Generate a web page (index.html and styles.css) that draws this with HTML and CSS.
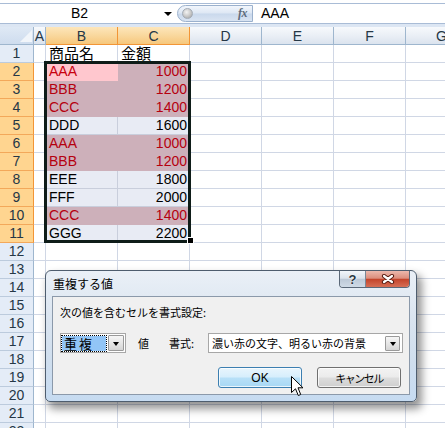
FILE: index.html
```html
<!DOCTYPE html>
<html lang="ja">
<head>
<meta charset="utf-8">
<title>重複する値</title>
<link rel="stylesheet" href="styles.css">
</head>
<body>
<div class="app">
  <div class="fbar">
    <div class="fbar-in">
      <div class="namebox"><span class="nb-text">B2</span><span class="nb-arrow"></span></div>
      <div class="pill"><span class="pill-dot"></span><span class="fx">fx</span></div>
      <div class="formula">AAA</div>
    </div>
  </div>

  <div class="sheet">
    <div class="row hdr">
      <div class="corner"><span class="tri"></span></div>
      <div class="ch">A</div>
      <div class="ch sel">B</div>
      <div class="ch sel">C</div>
      <div class="ch">D</div>
      <div class="ch">E</div>
      <div class="ch">F</div>
      <div class="ch">G</div>
    </div>
    <div class="row"><div class="rh">1</div><div class="c"></div><div class="c b jp">商品名</div><div class="c b jp">金額</div><div class="c"></div><div class="c"></div><div class="c"></div><div class="c"></div></div>
    <div class="row"><div class="rh sel">2</div><div class="c"></div><div class="c b act">AAA</div><div class="c n dup">1000</div><div class="c"></div><div class="c"></div><div class="c"></div><div class="c"></div></div>
    <div class="row"><div class="rh sel">3</div><div class="c"></div><div class="c b dup">BBB</div><div class="c n dup">1200</div><div class="c"></div><div class="c"></div><div class="c"></div><div class="c"></div></div>
    <div class="row"><div class="rh sel">4</div><div class="c"></div><div class="c b dup">CCC</div><div class="c n dup">1400</div><div class="c"></div><div class="c"></div><div class="c"></div><div class="c"></div></div>
    <div class="row"><div class="rh sel">5</div><div class="c"></div><div class="c b in">DDD</div><div class="c n in">1600</div><div class="c"></div><div class="c"></div><div class="c"></div><div class="c"></div></div>
    <div class="row"><div class="rh sel">6</div><div class="c"></div><div class="c b dup">AAA</div><div class="c n dup">1000</div><div class="c"></div><div class="c"></div><div class="c"></div><div class="c"></div></div>
    <div class="row"><div class="rh sel">7</div><div class="c"></div><div class="c b dup">BBB</div><div class="c n dup">1200</div><div class="c"></div><div class="c"></div><div class="c"></div><div class="c"></div></div>
    <div class="row"><div class="rh sel">8</div><div class="c"></div><div class="c b in">EEE</div><div class="c n in">1800</div><div class="c"></div><div class="c"></div><div class="c"></div><div class="c"></div></div>
    <div class="row"><div class="rh sel">9</div><div class="c"></div><div class="c b in">FFF</div><div class="c n in">2000</div><div class="c"></div><div class="c"></div><div class="c"></div><div class="c"></div></div>
    <div class="row"><div class="rh sel">10</div><div class="c"></div><div class="c b dup">CCC</div><div class="c n dup">1400</div><div class="c"></div><div class="c"></div><div class="c"></div><div class="c"></div></div>
    <div class="row"><div class="rh sel">11</div><div class="c"></div><div class="c b in">GGG</div><div class="c n in">2200</div><div class="c"></div><div class="c"></div><div class="c"></div><div class="c"></div></div>
    <div class="row"><div class="rh">12</div><div class="c"></div><div class="c"></div><div class="c"></div><div class="c"></div><div class="c"></div><div class="c"></div><div class="c"></div></div>
    <div class="row"><div class="rh">13</div><div class="c"></div><div class="c"></div><div class="c"></div><div class="c"></div><div class="c"></div><div class="c"></div><div class="c"></div></div>
    <div class="row"><div class="rh">14</div><div class="c"></div><div class="c"></div><div class="c"></div><div class="c"></div><div class="c"></div><div class="c"></div><div class="c"></div></div>
    <div class="row"><div class="rh">15</div><div class="c"></div><div class="c"></div><div class="c"></div><div class="c"></div><div class="c"></div><div class="c"></div><div class="c"></div></div>
    <div class="row"><div class="rh">16</div><div class="c"></div><div class="c"></div><div class="c"></div><div class="c"></div><div class="c"></div><div class="c"></div><div class="c"></div></div>
    <div class="row"><div class="rh">17</div><div class="c"></div><div class="c"></div><div class="c"></div><div class="c"></div><div class="c"></div><div class="c"></div><div class="c"></div></div>
    <div class="row"><div class="rh">18</div><div class="c"></div><div class="c"></div><div class="c"></div><div class="c"></div><div class="c"></div><div class="c"></div><div class="c"></div></div>
    <div class="row"><div class="rh">19</div><div class="c"></div><div class="c"></div><div class="c"></div><div class="c"></div><div class="c"></div><div class="c"></div><div class="c"></div></div>
    <div class="row"><div class="rh">20</div><div class="c"></div><div class="c"></div><div class="c"></div><div class="c"></div><div class="c"></div><div class="c"></div><div class="c"></div></div>
    <div class="row"><div class="rh">21</div><div class="c"></div><div class="c"></div><div class="c"></div><div class="c"></div><div class="c"></div><div class="c"></div><div class="c"></div></div>
    <div class="row"><div class="rh">22</div><div class="c"></div><div class="c"></div><div class="c"></div><div class="c"></div><div class="c"></div><div class="c"></div><div class="c"></div></div>

    <div class="selbox"></div>
    <div class="handle"></div>
  </div>

  <div class="dlg">
    <div class="dlg-title">重複する値</div>
    <div class="caps">
      <div class="cap cap-help">?</div>
      <div class="cap cap-close">
        <svg width="14" height="10" viewBox="0 0 14 10"><path d="M3 2 L11 8 M11 2 L3 8" stroke="#5a1d12" stroke-width="4.2" stroke-linecap="round"/><path d="M3 2 L11 8 M11 2 L3 8" stroke="#ffffff" stroke-width="2.2" stroke-linecap="round"/></svg>
      </div>
    </div>
    <div class="panel">
      <div class="lbl">次の値を含むセルを書式設定:</div>
      <div class="crow">
        <div class="combo combo1">
          <span class="selt">重複</span>
          <span class="ddb"><span class="ddtri"></span></span>
        </div>
        <span class="word w-val">値</span>
        <span class="word w-fmt">書式:</span>
        <div class="combo combo2">
          <span class="ctext">濃い赤の文字、明るい赤の背景</span>
          <span class="ddb"><span class="ddtri"></span></span>
        </div>
      </div>
      <div class="brow">
        <div class="btn btn-ok">OK</div>
        <div class="btn btn-cancel">キャンセル</div>
      </div>
    </div>
  </div>

  <svg class="cursor" width="13" height="21" viewBox="0 0 13 21"><path d="M0.5 0.5 L0.5 16.5 L4.5 12.8 L7.3 19.5 L9.7 18.5 L7 11.8 L12 11.8 Z" fill="#fff" stroke="#000" stroke-width="1" stroke-linejoin="miter"/></svg>
</div>
</body>
</html>
```

FILE: styles.css
```css
* { box-sizing: border-box; }
html, body { margin: 0; padding: 0; }
body {
  width: 445px;
  height: 428px;
  overflow: hidden;
  background: #fff;
  font-family: "Liberation Sans", "Noto Sans CJK JP", sans-serif;
  font-size: 14px;
  color: #000;
}
.app { position: relative; width: 445px; height: 428px; overflow: hidden; }

/* formula bar */
.fbar {
  height: 27px;
  padding-top: 3px;
  background: #fff;
  border-bottom: 3px solid #dce6f3;
}
.fbar-in {
  height: 21px;
  display: flex;
  align-items: center;
  background: #fff;
  border-top: 1px solid #a9bcd6;
  border-bottom: 1px solid #a9bcd6;
}
.namebox { width: 177px; height: 100%; display: flex; align-items: center; flex: none; }
.nb-text { width: 159px; text-align: center; line-height: 19px; }
.nb-arrow {
  width: 0; height: 0;
  margin-left: 5px;
  border-left: 4px solid transparent;
  border-right: 4px solid transparent;
  border-top: 4px solid #000;
}
.pill {
  flex: none;
  width: 76px;
  height: 17px;
  display: flex;
  align-items: center;
  border: 1px solid #9bb1cd;
  border-radius: 9px 0 0 9px;
  background: linear-gradient(#f2f6fc 0%, #dde7f4 48%, #c9d8ec 52%, #d9e4f2 100%);
}
.pill-dot {
  width: 11px; height: 11px;
  margin-left: 4px;
  border-radius: 50%;
  background: radial-gradient(circle at 40% 35%, #f4f4f4 0%, #c6c6c6 55%, #9a9a9a 100%);
  border: 1px solid #a4acb6;
}
.fx {
  margin-left: auto;
  margin-right: 5px;
  font-family: "Liberation Serif", serif;
  font-style: italic;
  font-weight: bold;
  font-size: 12px;
  color: #5f6c7c;
  letter-spacing: -0.5px;
}
.formula { padding-left: 8px; line-height: 19px; }

/* sheet */
.sheet { position: relative; }
.row {
  display: grid;
  grid-template-columns: 34px 12px repeat(6, 72px);
  height: 18px;
}
.row > div {
  height: 18px;
  border-right: 1px solid #d0d7e5;
  border-bottom: 1px solid #d0d7e5;
  line-height: 17px;
  white-space: nowrap;
  overflow: hidden;
}
.hdr > div { line-height: 18px; }
.corner {
  background: linear-gradient(#dfe9f5, #cedcee);
  display: flex;
  align-items: flex-end;
  justify-content: flex-end;
  padding: 0 1px 2px 0;
  border-right-color: #9eb6ce !important;
  border-bottom-color: #9eb6ce !important;
}
.tri {
  width: 0; height: 0;
  border-left: 12px solid transparent;
  border-bottom: 12px solid #f1f5fa;
}
.ch {
  text-align: center;
  color: #253746;
  background: linear-gradient(#f7f9fc 0%, #e9eef5 55%, #dbe3ee 100%);
  border-right-color: #9eb6ce !important;
  border-bottom-color: #9eb6ce !important;
}
.ch.sel {
  background: linear-gradient(#fde6bb 0%, #f9d69a 55%, #f6c77c 100%);
  border-right-color: #f29536 !important;
  border-bottom-color: #f29536 !important;
}
.rh {
  text-align: center;
  color: #253746;
  background: #e4ecf7;
  border-right-color: #9eb6ce !important;
  border-bottom-color: #bccbdd !important;
}
.rh.sel {
  background: #ffd590;
  border-right-color: #f29536 !important;
  border-bottom-color: #f3a85a !important;
}
.c.b { padding-left: 3px; }
.c.n { text-align: right; padding-right: 2px; }
.c.jp { font-size: 15px; }
.c.in { background: #e8ebf4; border-color: #c9cedc; }
.c.dup { background: #cdb0ba; border-color: #cdb0ba; color: #b5000f; }
.c.act { background: #ffc7ce; border-color: #ffc7ce; color: #c8000f; }

.selbox {
  position: absolute;
  left: 44px;
  top: 34px;
  width: 147px;
  height: 182px;
  border: 3px solid #0e1c18;
  pointer-events: none;
}
.handle {
  position: absolute;
  left: 187px;
  top: 210px;
  width: 7px;
  height: 7px;
  background: #000;
  border: 1px solid #fff;
}

/* dialog */
.dlg {
  position: absolute;
  left: 45px;
  top: 270px;
  width: 372px;
  height: 132px;
  border: 1px solid #4e5d6e;
  border-radius: 6px 6px 5px 5px;
  background: linear-gradient(#eaf0f7 0%, #dbe5f0 35%, #cfdeee 70%, #c6dbf1 100%);
  box-shadow: 4px 6px 9px 1px rgba(0, 0, 0, 0.42);
  display: flex;
  flex-direction: column;
  padding: 0 6px 6px 6px;
  font-family: "Noto Sans CJK JP", sans-serif;
}
.dlg-title {
  height: 25px;
  flex: none;
  display: flex;
  align-items: center;
  padding-left: 1px;
  font-size: 12px;
  color: #000;
}
.caps {
  position: absolute;
  top: 0;
  right: 6px;
  height: 17px;
  display: flex;
  border: 1px solid #5a6878;
  border-top: none;
  border-radius: 0 0 4px 4px;
  overflow: hidden;
}
.cap { height: 100%; display: flex; align-items: center; justify-content: center; }
.cap-help {
  width: 26px;
  border-right: 1px solid #7a8796;
  background: linear-gradient(#f2f6fa 0%, #dbe3ec 45%, #bdc9d7 52%, #cfdae6 100%);
  font-family: "Liberation Sans", sans-serif;
  font-weight: bold;
  font-size: 13px;
  color: #2b3643;
  text-shadow: 0 0 1px #fff, 0 0 2px #fff;
}
.cap-close {
  width: 43px;
  background: linear-gradient(#ecb8ac 0%, #dc8e7d 45%, #c4442b 52%, #d66e55 100%);
}
.panel {
  flex: 1;
  background: #f0f0f0;
  border: 1px solid #8b99aa;
  padding: 7px 6px 0 7px;
  font-size: 11px;
  color: #000;
}
.lbl { height: 16px; line-height: 16px; white-space: nowrap; }
.crow {
  margin-top: 13px;
  height: 20px;
  display: flex;
  align-items: center;
}
.combo {
  flex: none;
  height: 20px;
  background: #fff;
  border: 1px solid #a7a7a7;
  display: flex;
  align-items: center;
  padding: 1px;
}
.combo1 { width: 66px; }
.selt {
  width: 44px;
  height: 15px;
  background: #92c5f6;
  outline: 1px dotted #000;
  outline-offset: 0;
  font-size: 13px;
  line-height: 15px;
  letter-spacing: 2px;
  padding-left: 2px;
  white-space: nowrap;
}
.ddb {
  margin-left: auto;
  width: 16px;
  height: 16px;
  border: 1px solid #9a9a9a;
  border-radius: 1px;
  background: linear-gradient(#f6f6f6 0%, #e6e6e6 50%, #d5d5d5 100%);
  display: flex;
  align-items: center;
  justify-content: center;
}
.combo2 .ddb { width: 15px; height: 15px; margin-right: 1px; }
.ddtri {
  width: 0; height: 0;
  border-left: 3.5px solid transparent;
  border-right: 3.5px solid transparent;
  border-top: 4px solid #000;
  margin-top: 1px;
}
.word { flex: none; white-space: nowrap; line-height: 16px; }
.w-val { margin-left: 12px; width: 11px; }
.w-fmt { margin-left: 20px; width: 28px; }
.combo2 { width: 195px; margin-left: 11px; }
.ctext { padding-left: 2px; white-space: nowrap; line-height: 16px; }
.brow {
  margin-top: 14px;
  height: 21px;
  display: flex;
  justify-content: flex-end;
  padding-right: 2px;
}
.btn {
  width: 84px;
  height: 21px;
  border-radius: 3px;
  display: flex;
  align-items: center;
  justify-content: center;
  font-size: 11px;
  box-shadow: inset 0 0 0 1px rgba(255, 255, 255, 0.75);
}
.btn-ok {
  border: 1px solid #3c7fb1;
  background: linear-gradient(#e8f5fd 0%, #d6eefc 48%, #b8e0f8 52%, #a7d8f4 100%);
  font-family: "Liberation Sans", sans-serif;
  font-size: 12px;
}
.btn-cancel {
  margin-left: 15px;
  border: 1px solid #707070;
  background: linear-gradient(#f3f3f3 0%, #ebebeb 48%, #dddddd 52%, #cfcfcf 100%);
  letter-spacing: -1.5px;
}
.cursor { position: absolute; left: 291px; top: 376px; }
```
